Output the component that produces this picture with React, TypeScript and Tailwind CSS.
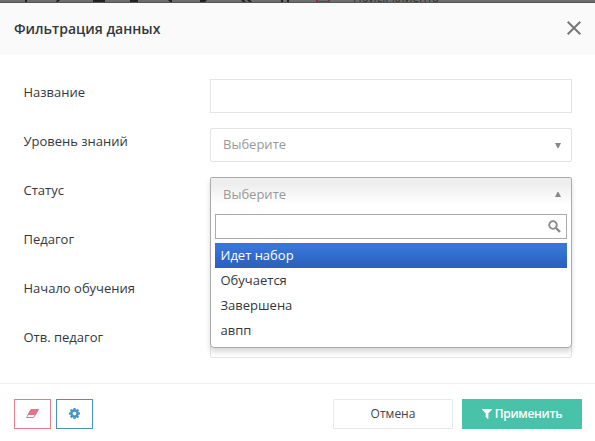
import { ReactNode } from "react";

const statuses = ["Идет набор", "Обучается", "Завершена", "авпп"];

function Row({ label, children }: { label: string; children: ReactNode }) {
  return (
    <div className="flex h-[34px]">
      <label className="w-[187px] shrink-0 pt-1 pl-[0.5px] leading-[18px] text-[#34383d]">{label}</label>
      <div className="relative h-[34px] w-[362px]">{children}</div>
    </div>
  );
}

function Select() {
  return (
    <div className="flex h-full items-center justify-between rounded-[2px] border border-[#e2e4e6] bg-white pr-[10px] pl-3 text-[#999]">
      <span>Выберите</span>
      <svg className="h-[5px] w-[6px] fill-[#888]" viewBox="0 0 6 5">
        <path d="M0 0h6L3.500 5h-1z" />
      </svg>
    </div>
  );
}

function StatusSelect() {
  return (
    <div className="absolute inset-x-0 top-0 z-10 h-[171px] rounded-t-[2px] rounded-b-[4px] border border-[#aaa] bg-white shadow-[0_4px_5px_rgba(0,0,0,0.15)]">
      <div className="flex h-[33px] items-center justify-between bg-linear-to-b from-[#eee] from-20% to-white to-80% pr-[10px] pl-3 text-[#999]">
        <span>Выберите</span>
        <svg className="h-[5px] w-[6px] fill-[#888]" viewBox="0 0 6 5">
          <path d="M0 5h6L3.500 0h-1z" />
        </svg>
      </div>
      <div className="mx-1 mt-[3px] flex h-[25px] items-center justify-end border border-[#aaa] pr-[5px]">
        <svg className="size-[13px]" viewBox="0 0 13 13" fill="none" stroke="#888">
          <circle cx="5" cy="5" r="3.8" strokeWidth="1.8" />
          <path d="M8 8l4 4" strokeWidth="2.4" />
        </svg>
      </div>
      <ul className="mx-1 mt-1">
        {statuses.map((s, i) => (
          <li
            key={s}
            className={`h-[25px] pl-[5.5px] leading-[25px] ${
              i === 0 ? "bg-linear-to-b from-[#3875d7] from-20% to-[#2a62bc] to-90% text-white" : "text-[#34383d]"
            }`}
          >
            {s}
          </li>
        ))}
      </ul>
    </div>
  );
}

export default function App() {
  return (
    <div className="flex h-[441px] w-[595px] flex-col overflow-hidden bg-white font-['Open_Sans',sans-serif] text-[13px]">
      {/* Край страницы под затемнением */}
      <div className="relative h-[3px] shrink-0 overflow-hidden border-b border-[#555] bg-[#6d6d6d] text-[#333]">
        <span className="absolute bottom-[-2px] left-[353px] text-[12px] leading-[13px]">Поиск клиента</span>
        <svg className="absolute top-0 left-0 h-[2px] w-[340px] fill-[#222]" viewBox="0 0 340 2">
          <path d="M25 0h2v2h-2zM57 0h3l-2 2h-2zM93 0h12v2H93zM130 0h8v2h-8zM168 0h4v2h-2zM200 0h7l-2 2h-5zM241 0h3l2 2h-3zM247 0h3l2 2h-3zM281 0h2v2h-2zM287 0h2v2h-2z" />
          <path className="fill-[#8c2f4b]" d="M316 0h2v1h10V0h2v2h-14z" />
        </svg>
      </div>

      <header className="flex h-[51px] shrink-0 items-center justify-between border-b border-[#f6f6f6] bg-[#fafafa] pr-[14px] pl-[14px]">
        <h2 className="text-[14px] font-semibold text-[#33373c]">Фильтрация данных</h2>
        <svg className="size-[14px]" viewBox="0 0 14 14" fill="none" stroke="#777" strokeWidth="2">
          <path d="M.7.7l12.600 12.600M13.300.7L.7 13.300" />
        </svg>
      </header>

      <div className="flex h-[329px] shrink-0 flex-col gap-[15px] pt-[25px] pl-[23px]">
        <Row label="Название">
          <div className="h-full border border-[#e2e4e6]" />
        </Row>
        <Row label="Уровень знаний">
          <Select />
        </Row>
        <Row label="Статус">
          <StatusSelect />
        </Row>
        <Row label="Педагог">
          <div className="h-full border border-[#e2e4e6]" />
        </Row>
        <Row label="Начало обучения">
          <div className="h-full border border-[#e2e4e6]" />
        </Row>
        <Row label="Отв. педагог">
          <div className="h-full rounded-[2px] border border-[#e2e4e6]" />
        </Row>
      </div>

      <footer className="flex flex-1 items-start border-t border-[#eee] px-[14px] pt-[15px]">
        <button className="flex h-[30px] w-[37px] items-center justify-center border border-[#e07f8f]">
          <svg className="mb-px h-[9px] w-[13px]" viewBox="0 0 13 9" fill="none" stroke="#e5738a">
            <path d="M5 .5h7.300L7.600 8.500H.6z" />
            <path d="M5 .5h7.300L9.500 5.500H2.200z" fill="#e5738a" />
          </svg>
        </button>
        <button className="ml-[5px] flex h-[30px] w-[37px] items-center justify-center border border-[#4594c0]">
          <svg className="mb-px size-[11px] fill-[#4594c8]" viewBox="0 128 1536 1536">
            <path d="M1024 896q0-106-75-181t-181-75-181 75-75 181 75 181 181 75 181-75 75-181zm512-109v222q0 12-8 23t-20 13l-185 28q-19 54-39 91 35 50 107 138 10 12 10 25t-9 23q-27 37-99 108t-94 71q-12 0-26-9l-138-108q-44 23-91 38-16 136-29 186-7 28-36 28h-222q-14 0-24.500-8.500t-11.500-21.500l-28-184q-49-16-90-37l-141 107q-10 9-25 9-14 0-25-11-126-114-165-168-7-10-7-23 0-12 8-23 15-21 51-66.500t54-70.500q-27-50-41-99l-183-27q-13-2-21-12.500t-8-23.500v-222q0-12 8-23t19-13l186-28q14-46 39-92-40-57-107-138-10-12-10-24 0-10 9-23 26-36 98.500-107.500t94.500-71.500q13 0 26 10l138 107q44-23 91-38 16-136 29-186 7-28 36-28h222q14 0 24.500 8.500t11.500 21.500l28 184q49 16 90 37l142-107q9-9 24-9 13 0 25 10 129 119 165 170 7 8 7 22 0 12-8 23-15 21-51 66.500t-54 70.500q26 50 41 98l183 28q13 2 21 12.500t8 23.500z" />
          </svg>
        </button>
        <button className="ml-auto h-[30px] w-[120px] rounded-[1px] border border-[#e7eaec] text-[12px] text-[#444]">
          Отмена
        </button>
        <button className="mr-[-1px] ml-[9px] flex h-[30px] w-[120px] items-center justify-center gap-[3px] bg-[#48c2a9] text-[12px] font-semibold tracking-[-0.3px] text-white">
          <svg className="size-[10px] fill-white" viewBox="0 256 1408 1408">
            <path d="M1403 295q17 41-14 70l-493 493v742q0 42-39 59-13 5-25 5-27 0-45-19l-256-256q-19-19-19-45v-486l-493-493q-31-29-14-70 17-39 59-39h1280q42 0 59 39z" />
          </svg>
          Применить
        </button>
      </footer>
    </div>
  );
}
